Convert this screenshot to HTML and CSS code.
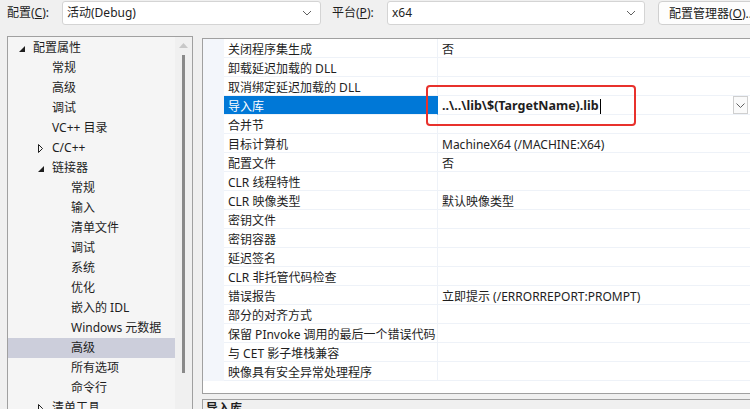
FILE: index.html
```html
<!DOCTYPE html>
<html lang="zh-CN">
<head>
  <meta charset="UTF-8">
  <title>属性页</title>
  <link rel="stylesheet" href="styles.css">
</head>
<body>

<div class="toolbar">
  <span class="label">配置(<u>C</u>):</span>
  <div class="combo combo-config">
    <span>活动(Debug)</span>
    <svg class="chev" width="10" height="6" viewBox="0 0 10 6"><path d="M1 1l4 4 4-4" fill="none" stroke="#606060" stroke-width="1"/></svg>
  </div>
  <span class="label label-platform">平台(<u>P</u>):</span>
  <div class="combo combo-platform">
    <span>x64</span>
    <svg class="chev" width="10" height="6" viewBox="0 0 10 6"><path d="M1 1l4 4 4-4" fill="none" stroke="#606060" stroke-width="1"/></svg>
  </div>
  <div class="manager-btn">配置管理器(<u>O</u>)...</div>
</div>

<div class="main">
  <div class="tree">
    <ul class="tree-list">
      <li class="lv0"><svg class="exp" width="6" height="6" viewBox="0 0 6 6"><path d="M6 0v6H0z" fill="#1e1e1e"/></svg>配置属性</li>
      <li class="lv1">常规</li>
      <li class="lv1">高级</li>
      <li class="lv1">调试</li>
      <li class="lv1">VC++ 目录</li>
      <li class="lv1"><svg class="col" width="5" height="9" viewBox="0 0 5 9"><path d="M0.5 0.5v8l4-4z" fill="none" stroke="#1e1e1e" stroke-width="1"/></svg>C/C++</li>
      <li class="lv1"><svg class="exp" width="6" height="6" viewBox="0 0 6 6"><path d="M6 0v6H0z" fill="#1e1e1e"/></svg>链接器</li>
      <li class="lv2">常规</li>
      <li class="lv2">输入</li>
      <li class="lv2">清单文件</li>
      <li class="lv2">调试</li>
      <li class="lv2">系统</li>
      <li class="lv2">优化</li>
      <li class="lv2">嵌入的 IDL</li>
      <li class="lv2">Windows 元数据</li>
      <li class="lv2 selected">高级</li>
      <li class="lv2">所有选项</li>
      <li class="lv2">命令行</li>
      <li class="lv1"><svg class="col" width="5" height="9" viewBox="0 0 5 9"><path d="M0.5 0.5v8l4-4z" fill="none" stroke="#1e1e1e" stroke-width="1"/></svg>清单工具</li>
    </ul>
    <div class="scrollbar">
      <svg class="up" width="9" height="5" viewBox="0 0 9 5"><path d="M0 5l4.5-5 4.5 5z" fill="#c8c8c8"/></svg>
      <div class="thumb"></div>
    </div>
  </div>

  <div class="right">
    <div class="props">
      <div class="prop-grid">
        <div class="gut"></div><div class="name">关闭程序集生成</div><div class="val">否</div>
        <div class="gut"></div><div class="name">卸载延迟加载的 DLL</div><div class="val"></div>
        <div class="gut"></div><div class="name">取消绑定延迟加载的 DLL</div><div class="val"></div>
        <div class="gut"></div><div class="name active">导入库</div>
        <div class="val edit"><span class="edit-text">..\..\lib\$(TargetName).lib</span><span class="caret"></span>
          <div class="drop"><svg width="9" height="5" viewBox="0 0 9 5"><path d="M0.5 0.5l4 4 4-4" fill="none" stroke="#606060" stroke-width="1"/></svg></div>
        </div>
        <div class="gut"></div><div class="name">合并节</div><div class="val"></div>
        <div class="gut"></div><div class="name">目标计算机</div><div class="val">MachineX64 (/MACHINE:X64)</div>
        <div class="gut"></div><div class="name">配置文件</div><div class="val">否</div>
        <div class="gut"></div><div class="name">CLR 线程特性</div><div class="val"></div>
        <div class="gut"></div><div class="name">CLR 映像类型</div><div class="val">默认映像类型</div>
        <div class="gut"></div><div class="name">密钥文件</div><div class="val"></div>
        <div class="gut"></div><div class="name">密钥容器</div><div class="val"></div>
        <div class="gut"></div><div class="name">延迟签名</div><div class="val"></div>
        <div class="gut"></div><div class="name">CLR 非托管代码检查</div><div class="val"></div>
        <div class="gut"></div><div class="name">错误报告</div><div class="val">立即提示 (/ERRORREPORT:PROMPT)</div>
        <div class="gut"></div><div class="name">部分的对齐方式</div><div class="val"></div>
        <div class="gut"></div><div class="name">保留 PInvoke 调用的最后一个错误代码</div><div class="val"></div>
        <div class="gut"></div><div class="name">与 CET 影子堆栈兼容</div><div class="val"></div>
        <div class="gut"></div><div class="name">映像具有安全异常处理程序</div><div class="val"></div>
      </div>
      <div class="highlight"></div>
    </div>
    <div class="desc">
      <div class="desc-title">导入库</div>
    </div>
  </div>
</div>

</body>
</html>
```

FILE: styles.css
```css
body {
  margin: 0;
  padding: 0;
  width: 750px;
  height: 409px;
  overflow: hidden;
  background: #f0f0f0;
  font-family: "Noto Sans", "Noto Sans CJK SC", sans-serif;
  font-size: 12px;
  color: #1e1e1e;
}

u {
  text-decoration: underline;
  text-underline-offset: 1px;
}

/* Top bar */
.toolbar {
  display: flex;
  align-items: center;
  height: 24px;
  padding: 1px 0 0 7px;
  white-space: nowrap;
}

.toolbar > * {
  flex-shrink: 0;
}

.label {
  width: 55px;
  margin-top: -2px;
}

.label-platform {
  margin-left: 11px;
}

.combo {
  display: flex;
  align-items: center;
  justify-content: space-between;
  box-sizing: border-box;
  height: 24px;
  padding: 0 8px 0 4px;
  background: #ffffff;
  border: 1px solid #d4d4d4;
  border-radius: 3px;
}

.combo span {
  margin-top: -2px;
}

.combo-config {
  width: 259px;
}

.combo-platform {
  width: 258px;
}

.manager-btn {
  box-sizing: border-box;
  height: 24px;
  margin-left: 13px;
  padding: 2px 10px;
  background: #fdfdfd;
  border: 1px solid #d0d0d0;
  border-radius: 4px;
}

/* Main area */
.main {
  display: flex;
  gap: 9px;
  margin-top: 11px;
  padding-left: 7px;
}

/* Tree */
.tree {
  display: flex;
  width: 186px;
  height: 373px;
  box-sizing: border-box;
  border: 1px solid #a0a0a0;
  border-bottom: none;
  background: #f5f5f5;
  overflow: hidden;
}

.tree-list {
  flex: 1;
  list-style: none;
  margin: 0;
  padding: 1px 0 0;
}

.tree-list li {
  position: relative;
  height: 20px;
  line-height: 20px;
  white-space: nowrap;
}

.lv0 { padding-left: 25px; }
.lv1 { padding-left: 44px; }
.lv2 { padding-left: 63px; }

.tree-list li.selected {
  background: #cccedb;
}

.tree-list svg {
  position: absolute;
  top: 7px;
}

.lv0 svg { left: 11px; top: 8px; }
.lv1 svg.exp { left: 30px; top: 8px; }
.lv1 svg.col { left: 30px; top: 6px; }

.scrollbar {
  display: flex;
  flex-direction: column;
  align-items: center;
  width: 17px;
  background: #f0f0f0;
}

.up {
  margin-top: 6px;
}

.thumb {
  width: 3px;
  height: 318px;
  margin-top: 7px;
  background: #8a8a8a;
}

/* Property grid */
.right {
  display: flex;
  flex-direction: column;
  flex: 1;
  margin-right: -20px;
}

.props {
  position: relative;
  height: 356px;
  margin-top: 2px;
  box-sizing: border-box;
  border: 1px solid #a0a0a0;
  background: #ffffff;
}

.prop-grid {
  display: grid;
  grid-template-columns: 21px 214px 1fr;
  grid-auto-rows: 19px;
}

.gut {
  background: #f3f6fb;
}

.name, .val {
  box-sizing: border-box;
  padding: 4px 0 0 4px;
  line-height: 14px;
  border-bottom: 1px solid #eef2f8;
  white-space: nowrap;
  overflow: hidden;
}

.name {
  border-right: 1px solid #eef2f8;
}

.name.active {
  background: #0078d7;
  color: #ffffff;
  border-right-color: #0078d7;
}

.val.edit {
  display: flex;
  align-items: center;
  position: relative;
  padding-top: 2px;
  font-weight: bold;
  font-size: 12.5px;
}

.caret {
  width: 1px;
  height: 15px;
  margin-left: 1px;
  background: #000000;
}

.drop {
  position: absolute;
  top: 0;
  left: 295px;
  width: 15px;
  height: 18px;
  display: flex;
  align-items: center;
  justify-content: center;
  box-sizing: border-box;
  border: 1px solid #cfcfcf;
  background: #fafafa;
}

.highlight {
  position: absolute;
  left: 223px;
  top: 46px;
  width: 210px;
  height: 41px;
  box-sizing: border-box;
  border: 2px solid #e8312c;
  border-radius: 4px;
}

/* Description */
.desc {
  margin-top: 5px;
  height: 10px;
  overflow: hidden;
  border: 1px solid #a0a0a0;
  border-bottom: none;
  background: #f0f0f0;
}

.desc-title {
  padding: 0 0 0 3px;
  font-weight: bold;
  line-height: 14px;
  margin-top: 2px;
}
```
